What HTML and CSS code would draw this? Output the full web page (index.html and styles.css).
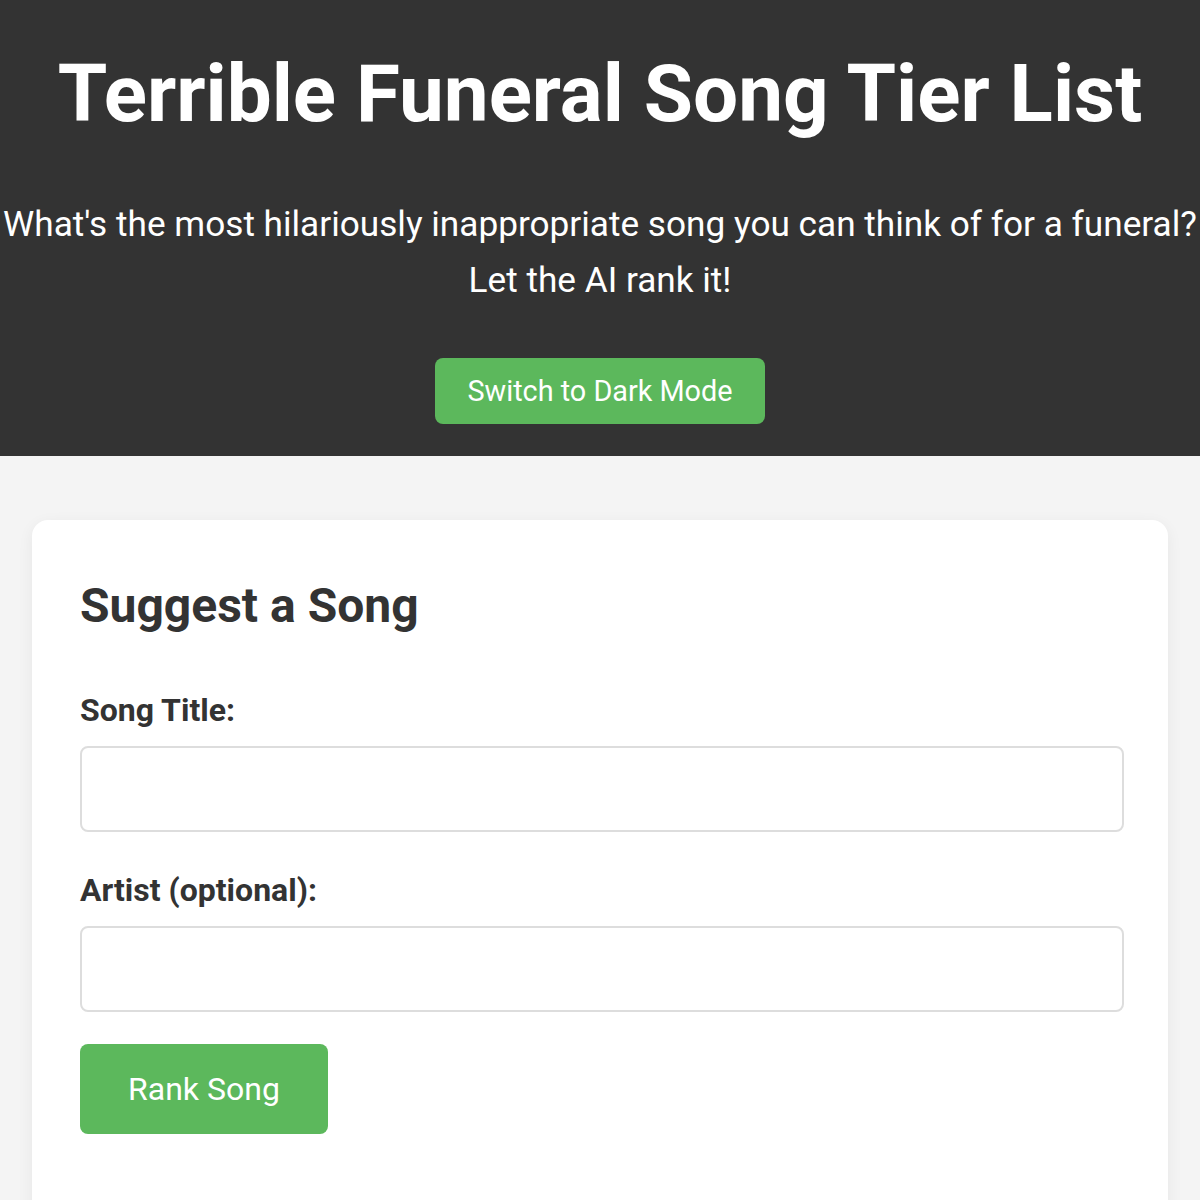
FILE: index.html
```html
<!DOCTYPE html>
<html lang="en">
<head>
<meta charset="utf-8">
<title>Terrible Funeral Song Tier List</title>
<link rel="stylesheet" href="styles.css">
</head>
<body>
<header class="site-header">
  <h1 class="site-title">Terrible Funeral Song Tier List</h1>
  <p class="site-intro">What's the most hilariously inappropriate song you can think of for a funeral? Let the AI rank it!</p>
  <button class="btn btn-mode" type="button">Switch to Dark Mode</button>
</header>
<main class="content">
  <section class="card">
    <h2 class="card-title">Suggest a Song</h2>
    <form class="song-form">
      <div class="form-group">
        <label class="form-label" for="title">Song Title:</label>
        <input class="form-input" id="title" type="text">
      </div>
      <div class="form-group">
        <label class="form-label" for="artist">Artist (optional):</label>
        <input class="form-input" id="artist" type="text">
      </div>
      <button class="btn btn-submit" type="button">Rank Song</button>
    </form>
  </section>
</main>
</body>
</html>
```

FILE: styles.css
```css
* { box-sizing: border-box; }

body {
  margin: 0;
  font-family: Roboto, "Liberation Sans", sans-serif;
  background: #f4f4f4;
  color: #333;
}

.site-header {
  background: #333;
  color: #fff;
  text-align: center;
  padding: 46px 0 32px;
}

.site-title {
  margin: 0;
  font-size: 80px;
  line-height: 96px;
  font-weight: 700;
}

.site-intro {
  margin: 54px 0 50px;
  font-size: 35.2px;
  line-height: 56px;
}

.btn {
  font-family: Roboto, "Liberation Sans", sans-serif;
  background: #5cb85c;
  color: #fff;
  border: none;
  border-radius: 8px;
  cursor: pointer;
  line-height: normal;
}

.btn-mode {
  font-size: 28.8px;
  padding: 16px 32px;
  height: 66px;
}

.content {
  padding: 64px 32px;
}

.card {
  background: #fff;
  border-radius: 16px;
  padding: 48px;
  box-shadow: 0 4px 16px rgba(0, 0, 0, 0.06);
  min-height: 760px;
}

.card-title {
  margin: 2px 0 44px;
  font-size: 48px;
  line-height: 72px;
  font-weight: 700;
}

.form-group {
  margin-bottom: 34px;
}

.form-label {
  display: block;
  font-size: 32px;
  line-height: 48px;
  font-weight: 700;
  margin-bottom: 12px;
}

.form-input {
  display: block;
  width: calc(100% + 4px);
  height: 86px;
  border: 2px solid #ddd;
  border-radius: 8px;
  font-size: 32px;
  padding: 0 20px;
  font-family: Roboto, "Liberation Sans", sans-serif;
}

.song-form .form-group:nth-of-type(2) {
  margin-bottom: 32px;
}

.btn-submit {
  font-size: 32px;
  padding: 0 48px;
  height: 90px;
}
```
